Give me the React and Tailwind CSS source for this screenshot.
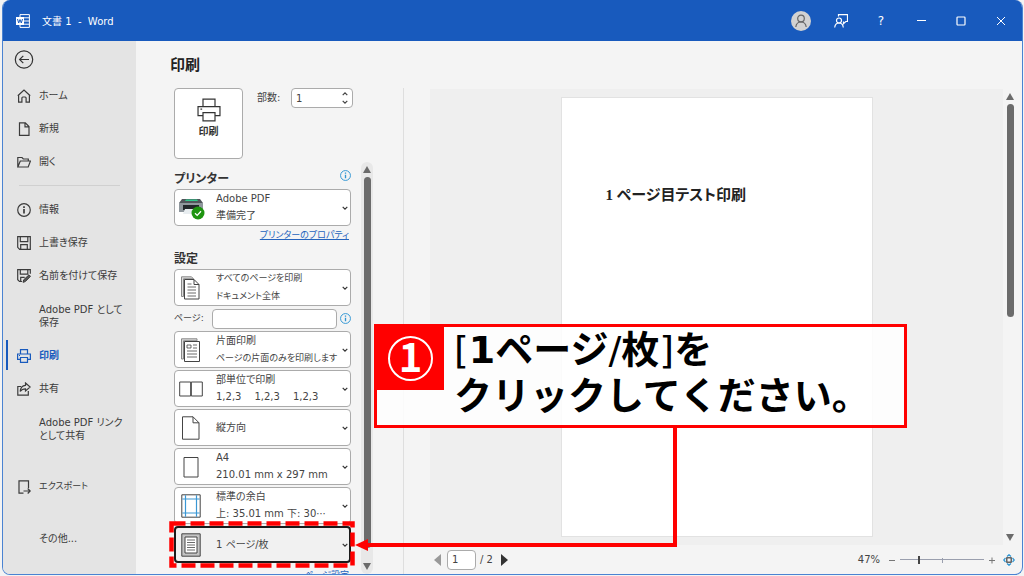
import { useState } from 'react';

function Icon({ size = 14, box = 14, className = '', children }) {
  return (
    <svg
      width={size}
      height={size}
      viewBox={`0 0 ${box} ${box}`}
      fill="none"
      stroke="currentColor"
      className={`shrink-0 ${className}`}
      aria-hidden="true"
    >
      {children}
    </svg>
  );
}

const HomeIcon = () => (
  <Icon><path d="M.8 6.800 7 1l6.200 5.800M1.600 6.200V13.200h3.300V9c0-.6.4-1 1-1h2.200c.6 0 1 .4 1 1v4.200h3.300V6.200" strokeWidth="1.200" /></Icon>
);

const NewIcon = () => (
  <Icon><path d="M2.500.8h5.800L12 4.500v8.800H2.500zM8 1v3.800h4" strokeWidth="1.200" /></Icon>
);

const OpenIcon = () => (
  <Icon><path d="M.8 12V2.500h4.200l1.300 1.500h5v2M.8 12l2.500-6H13.500l-2.300 6z" strokeWidth="1.200" /></Icon>
);

const InfoIcon = ({ size = 14, className }) => (
  <Icon size={size} className={className}>
    <circle cx="7" cy="7" r="6.300" strokeWidth="1.200" />
    <path d="M7 6v4.500M7 3.300v1.600" strokeWidth="1.700" />
  </Icon>
);

const SaveIcon = () => (
  <Icon><path d="M.7.7h12.600v12.600H2.700l-2-2zM3.300.7v5h7.500v-5M3.700 13V8.700h6.600V13" strokeWidth="1.200" /></Icon>
);

const SaveAsIcon = () => (
  <Icon>
    <path d="M5 12.500H2.500L.7 10.800V.7h12.600v4M3.300.7v4.500h7.500V.7M3.700 12.500V8.300h4" strokeWidth="1.200" />
    <path d="M6 13.300l.7-2.500 5.300-5 1.500 1.500-5.200 5.300z" fill="#555" />
  </Icon>
);

const PrintIcon = ({ size = 14, strokeWidth = 1.2 }) => (
  <Icon size={size}>
    <path d="M3.500 5V.7h7V5M3.500 10.300H.6V5h12.800v5.300h-2.900M3.500 8.500h7v4.800h-7z" strokeWidth={strokeWidth} />
    <path d="M2 6.500h1" strokeWidth={strokeWidth} />
  </Icon>
);

const ShareIcon = () => (
  <Icon><path d="M4 4.500H.8v8.700h10.500V9M8.500 1l4.700 4-4.700 4V6.800C6 6.800 4.500 7.500 3.200 9.500 3.500 6 5.500 3.500 8.500 3.300z" strokeWidth="1.200" /></Icon>
);

const ExportIcon = () => (
  <Icon><path d="M6.500 13.200H2V.8h9.500V8M6.500 11h6.500M10.700 8.500l2.500 2.500-2.500 2.500" strokeWidth="1.200" /></Icon>
);

function Doc({ children }) {
  return <Icon size={24} box={24} className="text-[#444]">{children}</Icon>;
}

const AllPagesIcon = () => (
  <Doc>
    <path d="M2.500 20.500V.8h10l2 2H4.500v17.700z" fill="#ddd" stroke="#888" />
    <path d="M5.500 3.500h9.500l5 5v14.500H5.500z" fill="#fff" />
    <path d="M15 3.500v5h5" />
    <path d="M8.500 11h8.500M8.500 14h8.500M8.500 17h8.500M8.500 20h8.500M8.500 8h4" strokeWidth=".8" />
  </Doc>
);

const OneSideIcon = () => (
  <Doc>
    <path d="M2.500 21V.8H18v2H4.500V21z" fill="#ddd" stroke="#888" />
    <path d="M5.500 3.500h15v20h-15z" fill="#fff" />
    <path d="M8 7h4v3H8zM14 7h4M14 10h4M8 13h10M8 16h10M8 19h10" strokeWidth=".8" />
  </Doc>
);

const CollateIcon = () => (
  <Doc><path d="M.7 5h11v14H.7zM12.300 5h11v14h-11z" fill="#fff" /></Doc>
);

const PortraitIcon = () => (
  <Doc><path d="M3.500.8h10.500l6 6v16.400H3.500zM14 .8v6h6" fill="#fff" /></Doc>
);

const PaperIcon = () => (
  <Doc><path d="M5 2.500h14v19.500H5z" fill="#fff" /></Doc>
);

const MarginIcon = () => (
  <Doc>
    <path d="M2.800.8h18.400v22.400H2.800z" fill="#fff" />
    <path d="M6.500 1.300v21.400M17.500 1.300v21.400M3.300 5h17.400M3.300 19h17.400" stroke="#3a97d4" strokeWidth="1.200" />
  </Doc>
);

const SheetIcon = () => (
  <Doc>
    <path d="M2.800.8h18.400v22.400H2.800z" fill="#c4c4c4" />
    <path d="M6 4h12v16H6z" fill="#fff" />
    <path d="M8 7h8M8 9.500h8M8 12h8M8 14.500h8M8 17h8" strokeWidth=".8" />
  </Doc>
);

const PrinterPhoto = () => (
  <svg width="28" height="24" viewBox="0 0 28 24" aria-hidden="true" className="shrink-0">
    <path d="M3 3h18l3 4H0z" fill="#50565b" />
    <path d="M7 3.500h11l1 1.500H6z" fill="#2fc98b" />
    <path d="M0 7h24v9H0z" fill="#8f979d" />
    <path d="M4 9h16v5H4z" fill="#22272b" />
    <path d="M6 13h12l2 5H4z" fill="#e8edf0" />
    <circle cx="19" cy="17" r="6.500" fill="#1e9410" />
    <path d="M16 17.200l2.200 2.200 3.800-4.200" fill="none" stroke="#fff" strokeWidth="1.300" />
  </svg>
);

const NAV_TOP = [
  { label: 'ホーム', icon: <HomeIcon /> },
  { label: '新規', icon: <NewIcon /> },
  { label: '開く', icon: <OpenIcon /> },
];

const NAV_FILE = [
  { label: '情報', icon: <InfoIcon /> },
  { label: '上書き保存', icon: <SaveIcon /> },
  { label: '名前を付けて保存', icon: <SaveAsIcon /> },
  { label: 'Adobe PDF として保存', tall: true },
  { label: '印刷', icon: <PrintIcon />, active: true },
  { label: '共有', icon: <ShareIcon /> },
  { label: 'Adobe PDF リンクとして共有', tall: true },
];

const LAYOUT_OPTIONS = [
  { title: '片面印刷', detail: 'ページの片面のみを印刷します', icon: <OneSideIcon />, smallDetail: true },
  {
    title: '部単位で印刷',
    detail: <span className="flex gap-[13px]"><span>1,2,3</span><span>1,2,3</span><span>1,2,3</span></span>,
    icon: <CollateIcon />,
  },
  { title: '縦方向', icon: <PortraitIcon /> },
  { title: 'A4', detail: '210.01 mm x 297 mm', icon: <PaperIcon /> },
  { title: '標準の余白', detail: '上: 35.01 mm 下: 30⋯', icon: <MarginIcon /> },
];

function NavItem({ label, icon, active, tall, small }) {
  return (
    <button
      type="button"
      className={`relative flex w-full items-center gap-2 pl-[14px] pr-3 text-left leading-[13px] ${tall ? 'h-[47px]' : 'h-[33px]'} ${small ? 'text-[9px]' : ''} ${active ? 'font-bold text-[#185abd]' : 'text-[#3b3b3b]'}`}
    >
      {active && <span className="absolute left-[3px] top-px h-[30px] w-[2px] bg-[#185abd]" />}
      <span className="w-[14px] shrink-0">{icon}</span>
      <span>{label}</span>
    </button>
  );
}

function OptionSelect({ name, title, detail, icon, selected, smallTitle, smallDetail }) {
  return (
    <div
      className={`relative grid h-[37px] rounded-[4px] ${selected ? 'border-2 border-[#1b1b1b] bg-[#f1f1f1]' : 'border border-[#ababab] bg-white'}`}
    >
      <select
        aria-label={name || title}
        className={`col-start-1 row-start-1 w-full appearance-none bg-transparent pr-4 outline-none ${selected ? 'pl-10' : 'pl-[41px]'} ${detail ? 'pb-[18px]' : ''} ${smallTitle ? 'text-[9px]' : ''}`}
      >
        <option>{title}</option>
      </select>
      <span className={`pointer-events-none col-start-1 row-start-1 flex items-center ${selected ? 'pl-[3px]' : 'pl-1'}`}>
        {icon}
      </span>
      {detail && (
        <span className={`pointer-events-none col-start-1 row-start-1 self-end whitespace-nowrap pb-px pl-[41px] leading-4 ${smallDetail ? 'text-[9px]' : ''}`}>
          {detail}
        </span>
      )}
      <Icon size={6} box={6} className={`pointer-events-none col-start-1 row-start-1 self-center justify-self-end text-[#333] ${selected ? 'mr-px' : 'mr-[2px]'}`}>
        <path d="M.7 1.800 3 4.100l2.300-2.300" strokeWidth="1.200" />
      </Icon>
    </div>
  );
}

function ScrollBar({ thumb, className }) {
  return (
    <div className={`flex shrink-0 flex-col items-center text-[#6b6b6b] ${className}`}>
      <svg width="8" height="7" viewBox="0 0 8 7" className="my-1 shrink-0"><path d="M4 0l4 7H0z" fill="currentColor" /></svg>
      <div className="min-h-0 w-[7px] flex-1">
        <div className={`rounded-full bg-[#6b6b6b] ${thumb}`} />
      </div>
      <svg width="8" height="7" viewBox="0 0 8 7" className="my-1 shrink-0"><path d="M4 7l4-7H0z" fill="currentColor" /></svg>
    </div>
  );
}

function TitleBar() {
  return (
    <header className="flex h-[41px] shrink-0 items-center bg-[#185abd] pr-px text-white">
      <svg width="14" height="14" viewBox="0 0 14 14" className="ml-[13px]" aria-hidden="true">
        <path d="M4 .6h9.400v12.800H4zM4 3.800h9.400M4 7h9.400M4 10.200h9.400" fill="none" stroke="#fff" />
        <path d="M0 3h8v8H0z" fill="#fff" />
        <path d="M1.500 5l1.200 4L4 5.500 5.300 9l1.200-4" fill="none" stroke="#185abd" />
      </svg>
      <h1 className="ml-3 whitespace-pre pt-px">文書 1  -  Word</h1>
      <div className="ml-auto flex">
        <button type="button" aria-label="アカウント" className="grid h-10 w-10 place-items-center">
          <span className="grid size-5 place-items-center rounded-full bg-[#d2d2d2] text-[#666]">
            <Icon><circle cx="7" cy="4.500" r="3.300" strokeWidth="1.200" /><path d="M1.800 13c.4-3 2.500-5 5.200-5s4.800 2 5.200 5" strokeWidth="1.200" /></Icon>
          </span>
        </button>
        <button type="button" aria-label="フィードバック" className="grid h-10 w-10 place-items-center">
          <Icon>
            <circle cx="5" cy="6.500" r="2.500" strokeWidth="1.200" />
            <path d="M.7 13.500c.3-2.700 2-4.500 4.300-4.500s4 1.800 4.300 4.500M4.500 2.500V.6h9V7.500h-1.700L9.500 9.700V7.500" strokeWidth="1.200" />
          </Icon>
        </button>
        <button type="button" className="grid h-10 w-10 place-items-center text-xs">?</button>
        <button type="button" aria-label="最小化" className="grid h-10 w-10 place-items-center">
          <Icon size={10} box={10}><path d="M1 4.500h9" /></Icon>
        </button>
        <button type="button" aria-label="最大化" className="grid h-10 w-10 place-items-center">
          <Icon size={10} box={10}><rect x="1" y="1" width="8" height="8" rx=".8" strokeWidth="1.200" /></Icon>
        </button>
        <button type="button" aria-label="閉じる" className="grid h-10 w-10 place-items-center">
          <Icon size={10} box={10}><path d="M1 1l8 8M9 1L1 9" /></Icon>
        </button>
      </div>
    </header>
  );
}

function SideBar() {
  return (
    <nav className="w-[133px] shrink-0 bg-[#e4e4e4]">
      <button type="button" aria-label="戻る" className="flex h-[38px] items-center pl-[11px] text-[#333]">
        <Icon size={20} box={20}>
          <circle cx="10" cy="9.500" r="8.700" strokeWidth="1.200" />
          <path d="M15 9.500H6M9.300 5.800 5.600 9.500l3.700 3.700" strokeWidth="1.200" />
        </Icon>
      </button>
      {NAV_TOP.map((item) => <NavItem key={item.label} {...item} />)}
      <hr className="mx-4 my-[7px] border-[#d0d0d0]" />
      {NAV_FILE.map((item) => <NavItem key={item.label} {...item} />)}
      <div className="mt-[18px] flex flex-col gap-[19px]">
        <NavItem label="エクスポート" icon={<ExportIcon />} small />
        <NavItem label="その他..." />
      </div>
    </nav>
  );
}

function PrintSettings() {
  const [copies, setCopies] = useState(1);
  const [pages, setPages] = useState('');

  return (
    <section className="ml-[30px] flex w-[237px] shrink-0 flex-col pt-[13px]">
      <h2 className="pl-1 text-[15px] font-bold leading-[22px] text-[#222]">印刷</h2>

      <div className="mt-3 flex pl-2">
        <button
          type="button"
          className="flex h-[71px] w-[69px] flex-col items-center rounded-[4px] border border-[#ababab] bg-white pt-[9px] font-bold leading-[15px] text-[#333]"
        >
          <PrintIcon size={24} strokeWidth={0.7} />
          <span className="mt-[2px]">印刷</span>
        </button>
        <label htmlFor="copies" className="ml-[14px] w-[34px] leading-5">部数:</label>
        <div className="flex h-5 w-[62px] rounded-[4px] border border-[#ababab] bg-white">
          <input
            id="copies"
            type="number"
            value={copies}
            onChange={(e) => setCopies(Number(e.target.value))}
            className="min-w-0 flex-1 pl-1 outline-none [appearance:textfield] [&::-webkit-inner-spin-button]:appearance-none"
          />
          <div className="flex w-[14px] flex-col items-center justify-evenly">
            <button type="button" aria-label="増やす" onClick={() => setCopies(copies + 1)}>
              <Icon size={6} box={6}><path d="M.7 4.200 3 1.900l2.300 2.300" strokeWidth="1.200" /></Icon>
            </button>
            <button type="button" aria-label="減らす" onClick={() => setCopies(Math.max(1, copies - 1))}>
              <Icon size={6} box={6}><path d="M.7 1.800 3 4.100l2.300-2.300" strokeWidth="1.200" /></Icon>
            </button>
          </div>
        </div>
      </div>

      <div className="mt-[3px] flex min-h-0 flex-1">
        <div className="w-[195px] min-w-0 overflow-hidden pl-2 pr-[10px]">
          <div className="flex h-[27px] justify-between">
            <h3 className="pt-[9px] text-xs font-bold leading-4 text-[#333]">プリンター</h3>
            <InfoIcon size={11} className="mt-2 text-[#2f96d3]" />
          </div>
          <OptionSelect name="プリンター" title="Adobe PDF" detail="準備完了" icon={<PrinterPhoto />} />
          <div className="flex h-5 items-center justify-end pr-[2px]">
            <a href="#properties" className="text-[9px] text-[#2563bd] underline">プリンターのプロパティ</a>
          </div>

          <h3 className="flex h-[23px] items-center pt-[2px] text-xs font-bold text-[#333]">設定</h3>
          <OptionSelect title="すべてのページを印刷" detail="ドキュメント全体" icon={<AllPagesIcon />} smallTitle smallDetail />
          <div className="my-[2px] flex h-[21px] items-center">
            <label htmlFor="pages" className="w-[38px] text-[9px]">ページ:</label>
            <input
              id="pages"
              type="text"
              value={pages}
              onChange={(e) => setPages(e.target.value)}
              className="h-5 min-w-0 flex-1 rounded-[4px] border border-[#ababab] bg-white px-1 outline-none"
            />
            <InfoIcon size={11} className="ml-[3px] text-[#2f96d3]" />
          </div>
          <div className="flex flex-col gap-[2px]">
            {LAYOUT_OPTIONS.map((option) => <OptionSelect key={option.title} {...option} />)}
            <div className="relative">
              <OptionSelect title="1 ページ/枚" icon={<SheetIcon />} selected />
              {/* Dashed highlight around the option to click */}
              <svg className="pointer-events-none absolute -left-[5px] -top-[5px] h-[47px] w-[187px]" aria-hidden="true">
                <rect x="2.500" y="2.500" width="181" height="42" fill="none" stroke="#f00" strokeWidth="4.500" strokeDasharray="14 5" />
              </svg>
            </div>
          </div>
          <div className="mt-1 pr-[2px] text-right">
            <a href="#page-setup" className="text-[9px] text-[#2563bd] underline">ページ設定</a>
          </div>
        </div>
        <ScrollBar className="w-3 rounded-full bg-[#e8e8e8]" thumb="h-[97%] w-[7px]" />
      </div>
    </section>
  );
}

function Preview() {
  const [zoom, setZoom] = useState(22);

  return (
    <section className="ml-[26px] mr-[5px] flex min-w-0 flex-1 flex-col pt-12">
      <div className="flex min-h-0 flex-1">
        <div className="flex flex-1 justify-center bg-[#efefef] py-2">
          <article className="w-[312px] border border-[#e2e2e2] bg-white pl-11 pt-[86px]">
            <p className="font-['Liberation_Serif','Noto_Sans_CJK_JP',serif] text-[15px] font-bold leading-[22px] text-[#222]">
              1 ページ目テスト印刷
            </p>
          </article>
        </div>
        <ScrollBar className="w-[14px] rounded-t-md bg-[#f4f4f4]" thumb="h-1/2 w-[7px]" />
      </div>

      <footer className="flex h-[29px] shrink-0 items-center pl-1">
        <button type="button" aria-label="前のページ" className="text-[#999]">
          <svg width="7" height="12" viewBox="0 0 7 12"><path d="M7 0v12L0 6z" fill="currentColor" /></svg>
        </button>
        <input
          aria-label="ページ番号"
          type="text"
          defaultValue="1"
          className="ml-[6px] h-5 w-[29px] rounded-[4px] border border-[#ababab] bg-white pl-1 outline-none"
        />
        <span className="ml-1">/ 2</span>
        <button type="button" aria-label="次のページ" className="ml-2 text-[#333]">
          <svg width="7" height="12" viewBox="0 0 7 12"><path d="M0 0v12l7-6z" fill="currentColor" /></svg>
        </button>

        <span className="ml-auto">47%</span>
        <button type="button" aria-label="縮小" className="ml-2 text-[#777]">
          <Icon size={8} box={8}><path d="M1 4.500h6" /></Icon>
        </button>
        <div className="relative ml-1 flex h-3 w-[84px] items-center">
          <span className="absolute left-1/2 top-1 h-[5px] w-px bg-[#9a9fae]" />
          <input
            aria-label="ズーム"
            type="range"
            value={zoom}
            onChange={(e) => setZoom(Number(e.target.value))}
            className="relative h-px w-full appearance-none bg-[#9a9fae] outline-none [&::-webkit-slider-thumb]:h-2 [&::-webkit-slider-thumb]:w-[2px] [&::-webkit-slider-thumb]:appearance-none [&::-webkit-slider-thumb]:bg-[#444]"
          />
        </div>
        <button type="button" aria-label="拡大" className="ml-1 text-[#777]">
          <Icon size={8} box={8}><path d="M1 4.500h6M4 1.500v6" /></Icon>
        </button>
        <button type="button" aria-label="ページに合わせる" className="ml-[7px] mr-[2px]">
          <Icon size={12} box={12}>
            <path d="M4 2.500 6 .7l2 1.800M4 9.500l2 1.800 2-1.800M2.500 4 .7 6l1.800 2M9.500 4l1.800 2-1.800 2" stroke="#2f96d3" strokeWidth="1.200" />
            <rect x="3.800" y="3.800" width="4.400" height="4.400" stroke="#444" strokeWidth="1.200" />
          </Icon>
        </button>
      </footer>
    </section>
  );
}

function Callout() {
  return (
    <>
      {/* Arrow from the callout back to the highlighted option */}
      <div className="pointer-events-none absolute left-[367px] top-[428px] h-[119px] w-[310px] border-b-4 border-r-4 border-[#f00]" />
      <svg width="13" height="12" viewBox="0 0 13 12" className="pointer-events-none absolute left-[355px] top-[539px]" aria-hidden="true">
        <path d="M0 6 13 0v12z" fill="#f00" />
      </svg>
      <div className="absolute left-[374px] top-[324px] flex h-[104px] w-[533px] border-[3px] border-[#f00] bg-white/85">
        <div className="grid h-[63px] w-[67px] shrink-0 place-items-center bg-[#f00] text-white">
          <span className="flex size-[45px] justify-center rounded-full border-2 border-white font-['Noto_Sans_CJK_JP',sans-serif] text-[40px] font-bold leading-[34px]">1</span>
        </div>
        <p className="pl-[10px] font-['DejaVu_Sans','Noto_Sans_CJK_JP',sans-serif] text-[38px] font-bold leading-[46px] text-black [font-feature-settings:normal]">
          <span className="font-normal">[</span>1ページ<span className="font-normal">/</span>枚<span className="font-normal">]</span>を
          <br />
          クリックしてください。
        </p>
      </div>
    </>
  );
}

export default function App() {
  return (
    <div className="relative h-screen bg-[#f3f3f3] pb-px pl-[2px] pr-px font-['DejaVu_Sans','Noto_Sans_CJK_JP',sans-serif] text-[10px] text-[#444] [font-feature-settings:'palt']">
      <div className="flex h-full flex-col overflow-hidden rounded-lg border border-t-0 border-[#4a83d2] bg-[#f4f4f4]">
        <TitleBar />
        <main className="flex min-h-0 flex-1">
          <SideBar />
          <PrintSettings />
          <div className="mt-[47px] w-px shrink-0 bg-[#dedede]" />
          <Preview />
        </main>
      </div>
      <Callout />
    </div>
  );
}
